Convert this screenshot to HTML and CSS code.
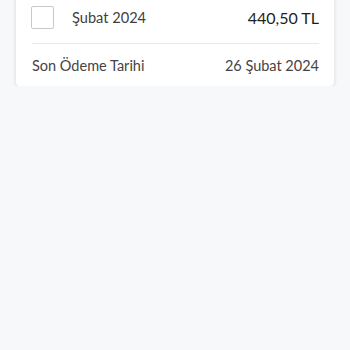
FILE: index.html
```html
<!DOCTYPE html>
<html lang="tr">
<head>
<meta charset="utf-8">
<link rel="stylesheet" href="styles.css">
</head>
<body>
<div class="card">
  <div class="row row-main">
    <div class="left">
      <span class="checkbox"></span>
      <span class="month">Şubat 2024</span>
    </div>
    <span class="amount">440,50 TL</span>
  </div>
  <div class="row row-due">
    <span class="label">Son Ödeme Tarihi</span>
    <span class="date">26 Şubat 2024</span>
  </div>
</div>
</body>
</html>
```

FILE: styles.css
```css
html, body {
  margin: 0;
  padding: 0;
  background: #f7f8fa;
  font-family: "Lato", "Noto Sans", sans-serif;
}
.card {
  margin: -5px 16px 0 16px;
  background: #fff;
  border-radius: 0 0 4px 4px;
  box-shadow: 0 1px 4px rgba(0,0,0,0.14);
  padding: 0 15px 0 16px;
}
.row {
  display: flex;
  align-items: center;
  justify-content: space-between;
  box-sizing: border-box;
}
.row-main {
  height: 49px;
  padding-bottom: 3px;
  border-bottom: 1px solid #e8e8ea;
}
.row-due {
  height: 42px;
}
.left {
  display: flex;
  align-items: center;
}
.checkbox {
  width: 21px;
  height: 21px;
  border: 1px solid #c9c9cc;
  border-radius: 2px;
  box-sizing: content-box;
  margin-left: -1px;
}
.month {
  margin-left: 18px;
  font-size: 14.6px;
  color: #3f3f3f;
}
.amount {
  font-size: 16px;
  color: #1e1e1e;
}
.label, .date {
  font-size: 14.5px;
  color: #444;
}
```
